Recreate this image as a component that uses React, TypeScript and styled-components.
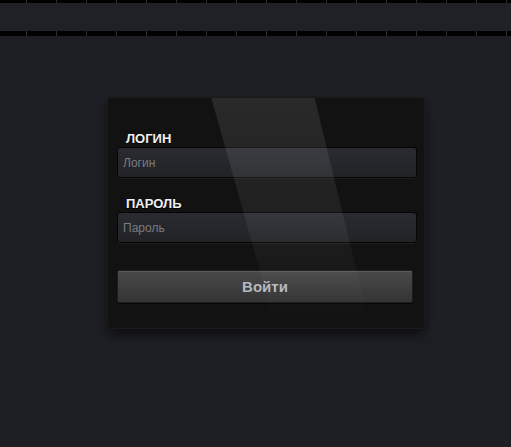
import React from "react";
import styled, { createGlobalStyle } from "styled-components";

const Global = createGlobalStyle`
  html, body {
    margin: 0;
    padding: 0;
    background: #1e1f24;
    font-family: "Liberation Sans", Arial, sans-serif;
  }
`;

const Page = styled.div`
  min-height: 447px;
  background: #1e1f24;
  overflow: hidden;
`;

const Rule = styled.div<{ $h: number }>`
  height: ${(p) => p.$h}px;
  background: repeating-linear-gradient(
    to right,
    #000 0 26px,
    #2c2d31 26px 27px,
    #000 27px 30px
  );
`;

const Bar = styled.div`
  height: 28px;
  background: #202126;
`;

const Card = styled.form`
  position: relative;
  box-sizing: border-box;
  width: 318px;
  margin: 61px 0 0 107px;
  padding: 33px 8px 25px 9px;
  background: #121212;
  border: 1px solid #1b1b1b;
  border-radius: 4px;
  box-shadow: 0 6px 12px rgba(0, 0, 0, 0.55);
  display: flex;
  flex-direction: column;
`;

const Glare = styled.svg`
  position: absolute;
  left: 0;
  top: 0;
  width: 100%;
  height: 100%;
  pointer-events: none;
  z-index: 2;
`;

const Group = styled.div`
  display: flex;
  flex-direction: column;
  & + & {
    margin-top: 18px;
  }
`;

const Label = styled.label`
  display: block;
  padding-left: 9px;
  margin-bottom: 1px;
  font: bold 13px/15px "Liberation Sans", Arial, sans-serif;
  color: #f0f0f2;
  text-shadow: 0 1px 0 #000;
`;

const Input = styled.input`
  box-sizing: border-box;
  width: 300px;
  height: 31px;
  margin: 0;
  padding: 0 6px 0 5px;
  background: linear-gradient(#2a2b30, #222327);
  border: 1px solid #050505;
  border-radius: 3px;
  box-shadow: 0 1px 0 #1d1d1d;
  color: #ccc;
  font: 12px "Liberation Sans", Arial, sans-serif;
  outline: none;
  &::placeholder {
    color: #7b7c80;
  }
`;

const Button = styled.button`
  box-sizing: border-box;
  width: 296px;
  height: 33px;
  margin-top: 27px;
  background: linear-gradient(#494949, #343434);
  border: 1px solid #1e1e1e;
  border-radius: 2px;
  box-shadow: inset 0 1px 0 #5a5a5a, 0 1px 1px rgba(0, 0, 0, 0.6);
  color: #b3b8c0;
  font: bold 15px "Liberation Sans", Arial, sans-serif;
  cursor: pointer;
`;

export default function App() {
  return (
    <Page>
      <Global />
      <Rule $h={3} />
      <Bar />
      <Rule $h={5} />
      <Card onSubmit={(e) => e.preventDefault()}>
        <Group>
          <Label>ЛОГИН</Label>
          <Input placeholder="Логин" />
        </Group>
        <Group>
          <Label>ПАРОЛЬ</Label>
          <Input type="password" placeholder="Пароль" />
        </Group>
        <Button type="submit">Войти</Button>
        <Glare viewBox="0 0 318 232" preserveAspectRatio="none">
          <defs>
            <linearGradient id="gl" x1="0" y1="0" x2="0" y2="1">
              <stop offset="0" stopColor="#fff" stopOpacity="0.1" />
              <stop offset="0.5" stopColor="#fff" stopOpacity="0.06" />
              <stop offset="0.8" stopColor="#fff" stopOpacity="0.02" />
              <stop offset="1" stopColor="#fff" stopOpacity="0" />
            </linearGradient>
            <radialGradient id="spot" cx="0.5" cy="0" r="0.5">
              <stop offset="0" stopColor="#fff" stopOpacity="0.9" />
              <stop offset="0.5" stopColor="#fff" stopOpacity="0.35" />
              <stop offset="1" stopColor="#fff" stopOpacity="0" />
            </radialGradient>
          </defs>
          <polygon points="104,0 208,0 264,232 169,232" fill="url(#gl)" />
          <ellipse cx="116" cy="0" rx="14" ry="5" fill="url(#spot)" />
        </Glare>
      </Card>
    </Page>
  );
}
